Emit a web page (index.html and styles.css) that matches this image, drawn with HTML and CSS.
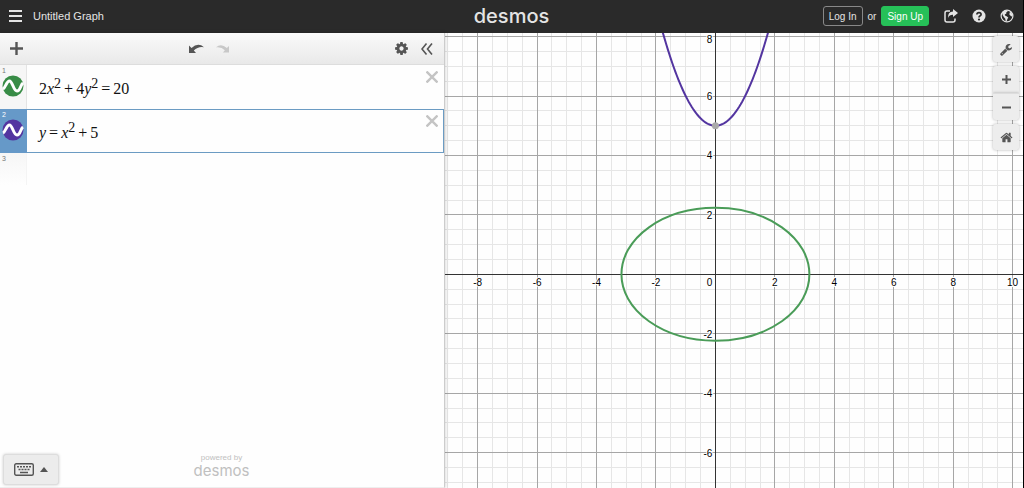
FILE: index.html
```html
<!DOCTYPE html>
<html lang="en">
<head>
  <meta charset="UTF-8">
  <title>Untitled Graph</title>
  <meta name="viewport" content="width=device-width, initial-scale=1.0">
  <link rel="stylesheet" href="styles.css">
</head>
<body>

  <!-- Header -->
  <header class="header">
    <div class="header-left">
      <button class="icon-btn" aria-label="Open menu">
        <svg width="13" height="12" viewBox="0 0 13 12"><path d="M0 1h13M0 6h13M0 11h13" stroke="#e4e4e4" stroke-width="2"/></svg>
      </button>
      <span class="graph-title">Untitled Graph</span>
    </div>
    <a class="logo" href="#">desmos</a>
    <div class="header-right">
      <button class="login">Log In</button>
      <span class="or">or</span>
      <button class="signup">Sign Up</button>
      <div class="header-icons">
        <button class="icon-btn" aria-label="Share graph">
          <svg width="14" height="14" viewBox="0 0 14 14"><path d="M6 2H3Q1 2 1 4v7q0 2 2 2h6q2 0 2-2V9.500" fill="none" stroke="#e4e4e4" stroke-width="1.500"/><path d="M9 0l5 4-5 4V5.700Q5.500 5.500 4 9 3.600 2.800 9 2.400z" fill="#e4e4e4"/></svg>
        </button>
        <button class="icon-btn" aria-label="Help">
          <svg width="14" height="14" viewBox="0 0 14 14"><circle cx="7" cy="7" r="6.500" fill="#e4e4e4"/><path d="M4.900 5.500Q5 3.600 7 3.600t2.100 1.700Q9.100 6.400 7.900 7 7 7.500 7 8.500" fill="none" stroke="#2a2a2a" stroke-width="1.700"/><circle cx="7" cy="10.500" r="1.100" fill="#2a2a2a"/></svg>
        </button>
        <button class="icon-btn" aria-label="Language">
          <svg width="14" height="14" viewBox="0 0 14 14"><circle cx="7" cy="7" r="5.900" fill="none" stroke="#e4e4e4" stroke-width="1.200"/><path d="M2 3.500Q4 1.200 7.300 1.200L7.600 2.400 6.200 3.600 6.400 4.600 4.800 5.600 5 6.600 6.600 7.200 8.300 8.400 7.400 10 6.600 12.300 5.600 12 5.300 9.800 4 8.200 2.600 6z" fill="#e4e4e4"/><path d="M9.600 3.500L11 2.900Q12.500 4.600 12.600 7L11.600 7.600 10.600 6.800 9.400 5.500z" fill="#e4e4e4"/></svg>
        </button>
      </div>
    </div>
  </header>

  <main class="main">

    <!-- Expression list -->
    <section class="panel">
      <div class="toolbar">
        <button class="icon-btn" aria-label="Add item">
          <svg width="13" height="13" viewBox="0 0 13 13"><path d="M6.500 0v13M0 6.500h13" stroke="#555" stroke-width="2.400"/></svg>
        </button>
        <div class="history">
          <button class="icon-btn" aria-label="Undo">
            <svg width="15" height="9" viewBox="0 0 15 9"><path d="M0 1.500V9h7L4.800 6.600Q9 2.200 15 3.200 9-2 2.500 4z" fill="#555"/></svg>
          </button>
          <button class="icon-btn" aria-label="Redo" disabled>
            <svg width="13" height="9" viewBox="0 0 15 9"><path d="M15 1.500V9H8l2.200-2.400Q6 2.200 0 3.200 6-2 12.500 4z" fill="#c8c8c8"/></svg>
          </button>
        </div>
        <div class="toolbar-end">
          <button class="icon-btn" aria-label="Edit list">
            <svg width="15" height="15" viewBox="0 0 1792 1792"><path fill="#555" d="M1152 896q0-106-75-181t-181-75-181 75-75 181 75 181 181 75 181-75 75-181zm512-109v222q0 12-8 23t-20 13l-185 28q-19 54-39 91 35 50 107 138 10 12 10 25t-9 23q-27 37-99 108t-94 71q-12 0-26-9l-138-108q-44 23-91 38-16 136-29 186-7 28-36 28h-222q-14 0-24.500-8.500t-11.500-21.500l-28-184q-49-16-90-37l-141 107q-10 9-25 9-14 0-25-11-126-114-165-168-7-10-7-23 0-12 8-23 15-21 51-66.500t54-70.500q-27-50-41-99l-183-27q-13-2-21-12.500t-8-23.500v-222q0-12 8-23t19-13l186-28q14-46 39-92-40-57-107-138-10-12-10-24 0-10 9-23 26-36 98.500-107.500t94.500-71.500q13 0 26 10l138 107q44-23 91-38 16-136 29-186 7-28 36-28h222q14 0 24.500 8.500t11.500 21.500l28 184q49 16 90 37l142-107q9-9 24-9 13 0 25 10 129 119 165 170 7 8 7 22 0 12-8 23-15 21-51 66.500t-54 70.500q26 50 41 98l183 28q13 2 21 12.500t8 23.500z"/></svg>
          </button>
          <button class="icon-btn" aria-label="Hide list">
            <svg width="12" height="12" viewBox="0 0 12 12"><path d="M5.500 0.500L1 6l4.500 5.500M11 0.500L6.500 6l4.500 5.500" fill="none" stroke="#555" stroke-width="1.600"/></svg>
          </button>
        </div>
      </div>

      <ol class="expressions">
        <li class="expression">
          <div class="tab">
            <span class="num">1</span>
            <button class="icon-btn" aria-label="Hide expression 1">
              <svg width="22" height="22" viewBox="0 0 22 22"><circle cx="11" cy="11" r="10.500" fill="#388c46"/><path d="M1 14C3.500 13 4.500 6 7.500 6S11.500 16 15 16 18.500 9.500 21 8" fill="none" stroke="#fff" stroke-width="3"/></svg>
            </button>
          </div>
          <div class="math" role="textbox" contenteditable="true" spellcheck="false" aria-label="Expression 1">2<i>x</i><sup>2</sup><span class="op">+</span>4<i>y</i><sup>2</sup><span class="op">=</span>20</div>
          <button class="delete" aria-label="Delete expression 1">
            <svg width="12" height="12" viewBox="0 0 12 12"><path d="M0.500 0.500l11 11M11.500 0.500l-11 11" stroke="#c4c4c4" stroke-width="2.400"/></svg>
          </button>
        </li>
        <li class="expression selected">
          <div class="tab">
            <span class="num">2</span>
            <button class="icon-btn" aria-label="Hide expression 2">
              <svg width="22" height="22" viewBox="0 0 22 22"><circle cx="11" cy="11" r="10.500" fill="#5335a0"/><path d="M1 14C3.500 13 4.500 6 7.500 6S11.500 16 15 16 18.500 9.500 21 8" fill="none" stroke="#fff" stroke-width="3"/></svg>
            </button>
          </div>
          <div class="math" role="textbox" contenteditable="true" spellcheck="false" aria-label="Expression 2"><i>y</i><span class="op">=</span><i>x</i><sup>2</sup><span class="op">+</span>5</div>
          <button class="delete" aria-label="Delete expression 2">
            <svg width="12" height="12" viewBox="0 0 12 12"><path d="M0.500 0.500l11 11M11.500 0.500l-11 11" stroke="#c4c4c4" stroke-width="2.400"/></svg>
          </button>
        </li>
        <li class="expression empty">
          <div class="tab"><span class="num">3</span></div>
        </li>
      </ol>

      <div class="panel-footer">
        <button class="keypad-btn" aria-label="Show keypad">
          <svg width="20" height="13" viewBox="0 0 20 13"><rect x="0.700" y="0.700" width="18.600" height="11.600" rx="1.500" fill="none" stroke="#555" stroke-width="1.400"/><path d="M3 3.700h14M4.500 6.500h11" stroke="#555" stroke-width="1.600" stroke-dasharray="2 1"/><path d="M6 9.500h8" stroke="#555" stroke-width="1.500"/></svg>
          <svg width="8" height="5" viewBox="0 0 8 5"><path d="M0 5l4-5 4 5z" fill="#555"/></svg>
        </button>
        <div class="powered">
          <span>powered by</span>
          <a href="#">desmos</a>
        </div>
      </div>
    </section>

    <!-- Graph paper -->
    <section class="graph">
      <svg class="paper" id="paper" role="img" aria-label="Graph"></svg>
      <div class="controls">
        <button class="control" aria-label="Graph settings">
          <svg width="13" height="13" viewBox="0 0 1792 1792"><path fill="#555" d="M384 1472q0-26-19-45t-45-19-45 19-19 45 19 45 45 19 45-19 19-45zm644-420l-682 682q-37 37-90 37-52 0-91-37l-106-108q-38-36-38-90 0-53 38-91l681-681q39 98 114.500 173.500t173.500 114.500zm634-435q0 39-23 106-47 134-164.500 217.500t-258.500 83.500q-185 0-316.500-131.500t-131.500-316.500 131.500-316.500 316.500-131.500q58 0 121.500 16.500t107.500 46.500q16 11 16 28t-16 28l-293 169v224l193 107q5-3 79-48.500t135.500-81 70.500-35.500q15 0 23.500 10t8.500 25z"/></svg>
        </button>
        <div class="zoom">
          <button class="control" aria-label="Zoom in">
            <svg width="9" height="9" viewBox="0 0 9 9"><path d="M4.500 0v9M0 4.500h9" stroke="#555" stroke-width="2"/></svg>
          </button>
          <button class="control" aria-label="Zoom out">
            <svg width="9" height="9" viewBox="0 0 9 9"><path d="M0 4.500h9" stroke="#555" stroke-width="2"/></svg>
          </button>
        </div>
        <button class="control" aria-label="Default viewport">
          <svg width="13" height="13" viewBox="0 0 1792 1792"><path fill="#555" d="M1472 992v480q0 26-19 45t-45 19h-384v-384h-256v384h-384q-26 0-45-19t-19-45v-480q0-1 .5-3t.5-3l575-474 575 474q1 2 1 6zm223-69l-62 74q-8 9-21 11h-3q-13 0-21-7l-692-577-692 577q-12 8-24 7-13-2-21-11l-62-74q-8-10-7-23.500t11-21.500l719-599q32-26 76-26t76 26l244 204v-195q0-14 9-23t23-9h192q14 0 23 9t9 23v408l219 182q10 8 11 21.500t-7 23.500z"/></svg>
        </button>
      </div>
    </section>
  </main>

  <script src="graph.js"></script>
</body>
</html>
```
FILE: styles.css
```css
* {
  box-sizing: border-box;
}

body {
  margin: 0;
  height: 100vh;
  display: flex;
  flex-direction: column;
  font-family: "Liberation Sans", Arial, sans-serif;
  background: #fefefe;
  border-right: 1px solid #000;
  overflow: hidden;
}

button {
  font-family: inherit;
  cursor: pointer;
}

svg {
  display: block;
}

.icon-btn {
  display: block;
  padding: 0;
  border: none;
  background: none;
}

/* header */
.header {
  display: grid;
  grid-template-columns: 1fr auto 1fr;
  align-items: center;
  height: 33px;
  flex-shrink: 0;
  padding: 0 9px 1px;
  background: #2a2a2a;
  color: #e4e4e4;
}

.header-left,
.header-right,
.header-icons {
  display: flex;
  align-items: center;
}

.header-left {
  gap: 11px;
}

.graph-title {
  font-size: 11px;
}

.logo {
  font-family: Inter, sans-serif;
  font-size: 20px;
  font-weight: 500;
  line-height: 24px;
  color: #e4e4e4;
  text-decoration: none;
}

.header-right {
  justify-content: flex-end;
  gap: 5px;
}

.login,
.signup {
  height: 20px;
  padding: 0 5px;
  border: 1px solid #888;
  border-radius: 3px;
  background: none;
  color: #e4e4e4;
  font-size: 10px;
}

.signup {
  border-color: #26c058;
  background: #26c058;
  color: #fff;
}

.or {
  font-size: 10px;
}

.header-icons {
  gap: 14px;
  margin-left: 10px;
}

/* layout */
.main {
  flex: 1;
  display: flex;
  min-height: 0;
}

.panel {
  width: 445px;
  flex-shrink: 0;
  display: flex;
  flex-direction: column;
  border-right: 1px solid #ccc;
  border-bottom: 1px solid #eee;
  box-shadow: 0 0 4px rgba(0, 0, 0, 0.2);
  z-index: 1;
}

.toolbar {
  display: grid;
  grid-template-columns: 1fr auto 1fr;
  align-items: center;
  height: 32px;
  padding: 0 11px 0 10px;
  background: linear-gradient(#fafafa, #e9e9e9);
  border-bottom: 1px solid #ddd;
}

.history {
  display: flex;
  gap: 12px;
  margin-right: 26px;
}

.toolbar-end {
  display: flex;
  align-items: center;
  justify-content: flex-end;
  gap: 12px;
}

/* expressions */
.expressions {
  flex: 1;
  margin: 0;
  padding: 0;
  list-style: none;
}

.expression {
  display: flex;
  height: 44px;
}

.tab {
  width: 27px;
  padding: 2px;
  background: #f6f6f6;
  border-right: 1px solid #e4e4e4;
}

.num {
  display: block;
  font-size: 7px;
  line-height: 8px;
  color: #777;
}

.math {
  flex: 1;
  padding: 10px 12px;
  font-family: "Liberation Serif", "Times New Roman", serif;
  font-size: 16px;
  line-height: 28px;
  color: #111;
  outline: none;
}

.math sup {
  font-size: 14px;
  line-height: 0;
  vertical-align: 6px;
}

.op {
  margin: 0 3px;
}

.delete {
  align-self: flex-start;
  padding: 6px;
  border: none;
  background: none;
}

.selected {
  box-shadow: inset 0 0 0 1px #6b9bc3;
}

.selected .tab {
  background: #6699c8;
  border-color: #6699c8;
}

.selected .num {
  color: #fff;
}

.empty .tab {
  height: 32px;
  background: linear-gradient(#f6f6f6, #fefefe);
  border-right-color: #f4f4f4;
}

/* panel footer */
.panel-footer {
  display: grid;
  grid-template-columns: 1fr auto 1fr;
  align-items: end;
  padding: 0 4px 2px 3px;
}

.keypad-btn {
  display: flex;
  align-items: center;
  justify-content: center;
  gap: 6px;
  width: 56px;
  height: 31px;
  border: 1px solid #ddd;
  border-radius: 3px;
  background: #ececec;
  box-shadow: 0 0 3px rgba(0, 0, 0, 0.2);
}

.powered {
  display: flex;
  flex-direction: column;
  align-items: center;
  padding-bottom: 5px;
  color: #c0c0c0;
  font-size: 8px;
  line-height: 8px;
}

.powered a {
  font-family: Inter, sans-serif;
  font-size: 15px;
  line-height: 18px;
  color: #c0c0c0;
  text-decoration: none;
}

/* graph */
.graph {
  position: relative;
  flex: 1;
  min-width: 0;
}

.paper {
  width: 100%;
  height: 100%;
}

.minor {
  stroke: #e6e6e6;
}

.major {
  stroke: #a6a6a6;
}

.axis {
  stroke: #333;
}

.label {
  font-size: 10px;
  fill: #000;
  stroke: #fff;
  stroke-width: 2;
  paint-order: stroke;
}

.curve {
  fill: none;
  stroke-width: 2;
}

.ellipse {
  stroke: #4a9c58;
}

.parabola {
  stroke: #5335a0;
}

.vertex {
  fill: #aaa;
}

/* floating buttons over the graph */
.controls {
  position: absolute;
  top: 3px;
  right: 4px;
  display: flex;
  flex-direction: column;
  gap: 4px;
}

.control {
  display: flex;
  align-items: center;
  justify-content: center;
  width: 26px;
  height: 26px;
  padding: 0;
  border: none;
  border-radius: 3px;
  background: #ededed;
  box-shadow: 0 0 3px rgba(0, 0, 0, 0.3);
}

.zoom .control {
  height: 27px;
  border-radius: 3px 3px 0 0;
}

.zoom .control + .control {
  border-top: 1px solid #ddd;
  border-radius: 0 0 3px 3px;
}
```
FILE: graph.js
```javascript
const paper = document.getElementById('paper');
const xMin = -9.1, xMax = 10.35, yMax = 8.12;

function draw() {
  const w = paper.clientWidth;
  const h = paper.clientHeight;
  const unit = w / (xMax - xMin);
  const yMin = yMax - h / unit;
  const px = x => (x - xMin) * unit;
  const py = y => (yMax - y) * unit;
  const snap = v => Math.floor(v) + 0.5;

  let minor = '', major = '', labels = '';

  // grid lines every half unit, a darker one every two units
  for (let i = Math.ceil(xMin * 2); i <= xMax * 2; i++) {
    const line = `M${snap(px(i / 2))} 0V${h}`;
    if (i % 4) minor += line; else major += line;
  }
  for (let i = Math.ceil(yMin * 2); i <= yMax * 2; i++) {
    const line = `M0 ${snap(py(i / 2))}H${w}`;
    if (i % 4) minor += line; else major += line;
  }

  for (let x = -8; x <= xMax; x += 2) {
    const cx = x === 0 ? px(0) - 6 : px(x);
    labels += `<text class="label" x="${cx}" y="${py(0) + 12}" text-anchor="middle">${x}</text>`;
  }
  for (let y = -6; y <= yMax; y += 2) {
    if (y === 0) continue;
    const cy = Math.max(py(y) + 4, 10);
    labels += `<text class="label" x="${px(0) - 3}" y="${cy}" text-anchor="end">${y}</text>`;
  }

  // y = x^2 + 5
  const points = [];
  for (let x = -2; x <= 2; x += 0.05) {
    points.push(`${px(x)},${py(x * x + 5)}`);
  }

  // 2x^2 + 4y^2 = 20
  paper.innerHTML = `
    <path class="minor" d="${minor}"/>
    <path class="major" d="${major}"/>
    <path class="axis" d="M${snap(px(0))} 0V${h}M0 ${snap(py(0))}H${w}"/>
    ${labels}
    <ellipse class="curve ellipse" cx="${px(0)}" cy="${py(0)}" rx="${Math.sqrt(10) * unit}" ry="${Math.sqrt(5) * unit}"/>
    <polyline class="curve parabola" points="${points.join(' ')}"/>
    <circle class="vertex" cx="${px(0)}" cy="${py(5)}" r="3.5"/>`;
}

draw();
window.addEventListener('resize', draw);
```
